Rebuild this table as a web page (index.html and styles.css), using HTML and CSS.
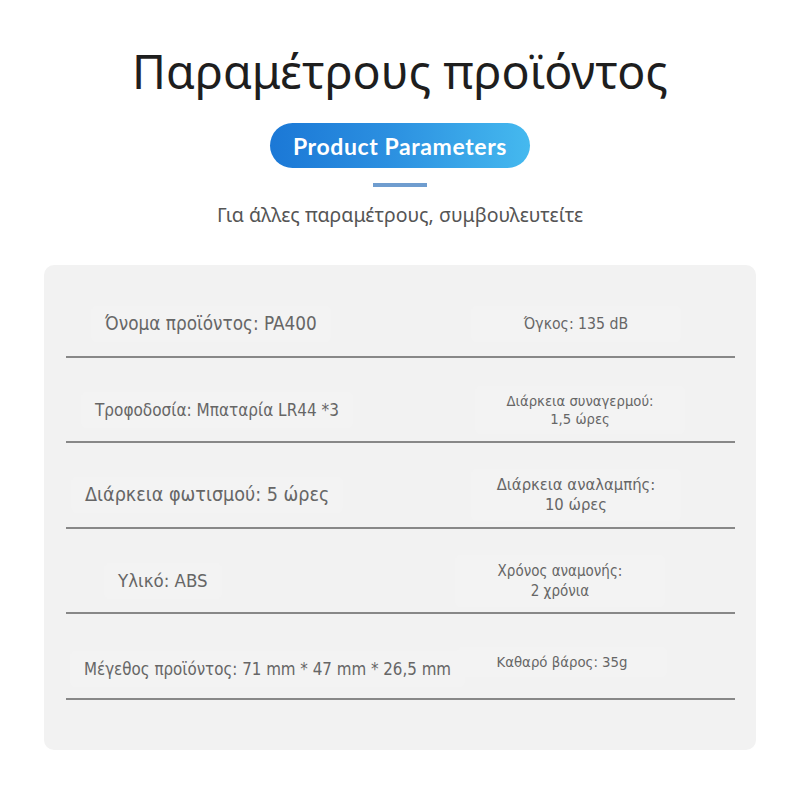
FILE: index.html
```html
<!DOCTYPE html>
<html lang="el">
<head>
<meta charset="utf-8">
<title>Παραμέτρους προϊόντος</title>
<link rel="stylesheet" href="styles.css">
</head>
<body>
<div class="page">
  <header class="header">
    <h1 class="title">Παραμέτρους προϊόντος</h1>
    <div class="pill">Product Parameters</div>
    <div class="bar"></div>
    <p class="subtitle">Για άλλες παραμέτρους, συμβουλευτείτε</p>
  </header>
  <section class="card">
    <div class="row">
      <div class="cell left l1">Όνομα προϊόντος: PA400</div>
      <div class="cell right r1">Όγκος: 135 dB</div>
    </div>
    <div class="row">
      <div class="cell left l2">Τροφοδοσία: Μπαταρία LR44 *3</div>
      <div class="cell right r2">Διάρκεια συναγερμού:<br>1,5 ώρες</div>
    </div>
    <div class="row">
      <div class="cell left l3">Διάρκεια φωτισμού: 5 ώρες</div>
      <div class="cell right r3">Διάρκεια αναλαμπής:<br>10 ώρες</div>
    </div>
    <div class="row">
      <div class="cell left l4">Υλικό: ABS</div>
      <div class="cell right r4">Χρόνος αναμονής:<br>2 χρόνια</div>
    </div>
    <div class="row">
      <div class="cell left l5">Μέγεθος προϊόντος: 71 mm * 47 mm * 26,5 mm</div>
      <div class="cell right r5">Καθαρό βάρος: 35g</div>
    </div>
  </section>
</div>
</body>
</html>
```

FILE: styles.css
```css
* { box-sizing: border-box; }
html, body { margin: 0; padding: 0; background: #ffffff; }
body { font-family: "Noto Sans", "Open Sans", "DejaVu Sans", sans-serif; }
.page { width: 800px; height: 800px; overflow: hidden; }

.header {
  display: flex;
  flex-direction: column;
  align-items: center;
  padding-top: 38px;
}
.title {
  margin: 0;
  font-weight: 400;
  font-size: 46.5px;
  line-height: 66px;
  color: #1e1e1e;
}
.pill {
  margin-top: 19px;
  width: 260px;
  height: 45px;
  border-radius: 23px;
  background: linear-gradient(90deg, #1b78d6 0%, #2b8fe0 45%, #45b9ef 100%);
  color: #fff;
  font-family: Lato, "Open Sans", sans-serif;
  font-weight: 700;
  font-size: 23px;
  letter-spacing: 0.6px;
  display: flex;
  align-items: center;
  justify-content: center;
}
.bar {
  margin-top: 15px;
  width: 54px;
  height: 4px;
  background: #6f9dcf;
}
.subtitle {
  margin: 15px 0 0;
  font-size: 19.5px;
  line-height: 26px;
  color: #555;
}

.card {
  margin: 37px 44px 0;
  background: #f2f2f2;
  border-radius: 10px;
  padding: 7px 21px 50px 22px;
}
.row {
  height: 85.5px;
  border-bottom: 2px solid #888;
  display: grid;
  grid-template-columns: 414px 1fr;
  align-items: center;
  padding-top: 21px;
}
.cell {
  color: #666;
  font-family: "DejaVu Sans Condensed", "Liberation Sans Narrow", "Noto Sans", sans-serif;
  font-size: 17px;
  line-height: 24px;
  border-radius: 6px;
  background: #f3f3f3;
  white-space: nowrap;
}
.left { justify-self: start; padding: 6px 14px; }
.right { justify-self: start; text-align: center; width: 210px; padding: 6px 0; }

.l1 { margin-left: 25px; font-size: 18.8px; }
.l2 { margin-left: 15px; font-size: 17px; }
.l3 { margin-left: 5px; font-size: 19.6px; }
.l4 { margin-left: 38px; font-size: 18.5px; }
.l5 { margin-left: 4px; font-size: 16.8px; margin-top: 6px; }

.r1 { margin-left: -9px; font-size: 15.7px; }
.r2 { margin-left: -5px; font-size: 14.7px; line-height: 18px; }
.r3 { margin-left: -9px; font-size: 16.5px; line-height: 20px; }
.r4 { margin-left: -25px; font-size: 15px; line-height: 20px; }
.r5 { margin-left: -23px; font-size: 14.8px; line-height: 18px; align-self: start; margin-top: 12px; }
```
